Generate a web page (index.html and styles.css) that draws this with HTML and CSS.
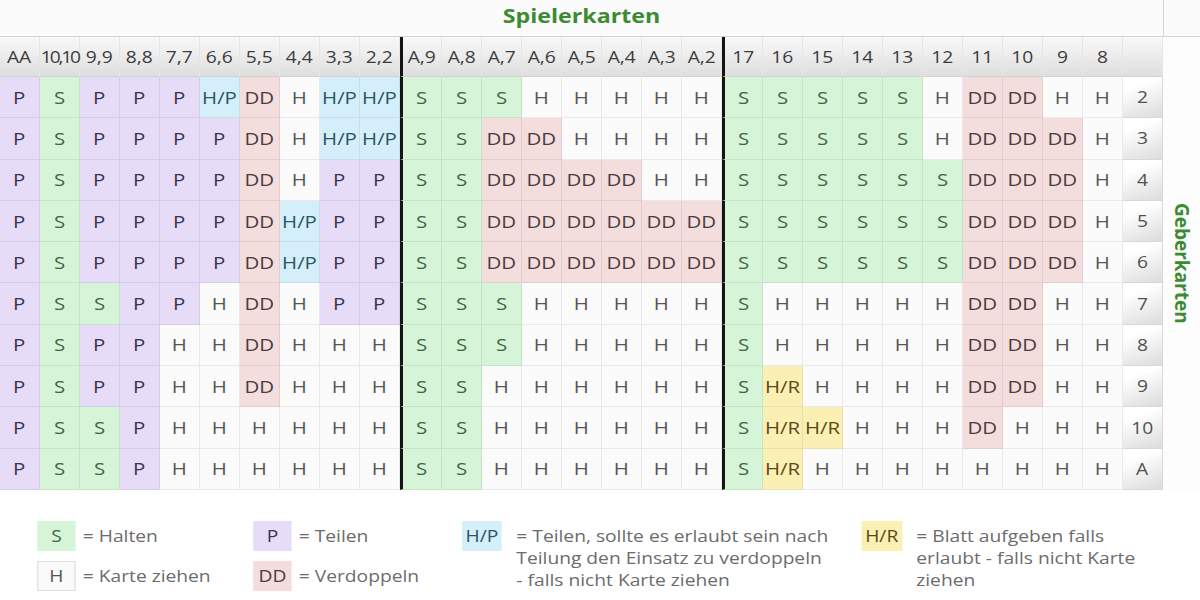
FILE: index.html
```html
<!DOCTYPE html>
<html lang="de">
<head>
<meta charset="utf-8">
<title>Blackjack Strategie</title>
<link rel="stylesheet" href="styles.css">
</head>
<body>
<div class="chart">
  <div class="title"><span>Spielerkarten</span></div>
  <div class="corner"></div>
  <div class="grid">
    <div class="hd"><span>AA</span></div><div class="hd"><span class="tight">10,10</span></div><div class="hd"><span>9,9</span></div><div class="hd"><span>8,8</span></div><div class="hd"><span>7,7</span></div><div class="hd"><span>6,6</span></div><div class="hd"><span>5,5</span></div><div class="hd"><span>4,4</span></div><div class="hd"><span>3,3</span></div><div class="hd"><span>2,2</span></div>
    <div class="hd x"><span>A,9</span></div><div class="hd"><span>A,8</span></div><div class="hd"><span>A,7</span></div><div class="hd"><span>A,6</span></div><div class="hd"><span>A,5</span></div><div class="hd"><span>A,4</span></div><div class="hd"><span>A,3</span></div><div class="hd"><span>A,2</span></div>
    <div class="hd x"><span>17</span></div><div class="hd"><span>16</span></div><div class="hd"><span>15</span></div><div class="hd"><span>14</span></div><div class="hd"><span>13</span></div><div class="hd"><span>12</span></div><div class="hd"><span>11</span></div><div class="hd"><span>10</span></div><div class="hd"><span>9</span></div><div class="hd"><span>8</span></div><div class="hd"></div>

    <div class="p"><span>P</span></div><div class="s"><span>S</span></div><div class="p"><span>P</span></div><div class="p"><span>P</span></div><div class="p"><span>P</span></div><div class="hp"><span>H/P</span></div><div class="dd"><span>DD</span></div><div class="h"><span>H</span></div><div class="hp"><span>H/P</span></div><div class="hp"><span>H/P</span></div>
    <div class="s x"><span>S</span></div><div class="s"><span>S</span></div><div class="s"><span>S</span></div><div class="h"><span>H</span></div><div class="h"><span>H</span></div><div class="h"><span>H</span></div><div class="h"><span>H</span></div><div class="h"><span>H</span></div>
    <div class="s x"><span>S</span></div><div class="s"><span>S</span></div><div class="s"><span>S</span></div><div class="s"><span>S</span></div><div class="s"><span>S</span></div><div class="h"><span>H</span></div><div class="dd"><span>DD</span></div><div class="dd"><span>DD</span></div><div class="h"><span>H</span></div><div class="h"><span>H</span></div><div class="dl"><span>2</span></div>

    <div class="p"><span>P</span></div><div class="s"><span>S</span></div><div class="p"><span>P</span></div><div class="p"><span>P</span></div><div class="p"><span>P</span></div><div class="p"><span>P</span></div><div class="dd"><span>DD</span></div><div class="h"><span>H</span></div><div class="hp"><span>H/P</span></div><div class="hp"><span>H/P</span></div>
    <div class="s x"><span>S</span></div><div class="s"><span>S</span></div><div class="dd"><span>DD</span></div><div class="dd"><span>DD</span></div><div class="h"><span>H</span></div><div class="h"><span>H</span></div><div class="h"><span>H</span></div><div class="h"><span>H</span></div>
    <div class="s x"><span>S</span></div><div class="s"><span>S</span></div><div class="s"><span>S</span></div><div class="s"><span>S</span></div><div class="s"><span>S</span></div><div class="h"><span>H</span></div><div class="dd"><span>DD</span></div><div class="dd"><span>DD</span></div><div class="dd"><span>DD</span></div><div class="h"><span>H</span></div><div class="dl"><span>3</span></div>

    <div class="p"><span>P</span></div><div class="s"><span>S</span></div><div class="p"><span>P</span></div><div class="p"><span>P</span></div><div class="p"><span>P</span></div><div class="p"><span>P</span></div><div class="dd"><span>DD</span></div><div class="h"><span>H</span></div><div class="p"><span>P</span></div><div class="p"><span>P</span></div>
    <div class="s x"><span>S</span></div><div class="s"><span>S</span></div><div class="dd"><span>DD</span></div><div class="dd"><span>DD</span></div><div class="dd"><span>DD</span></div><div class="dd"><span>DD</span></div><div class="h"><span>H</span></div><div class="h"><span>H</span></div>
    <div class="s x"><span>S</span></div><div class="s"><span>S</span></div><div class="s"><span>S</span></div><div class="s"><span>S</span></div><div class="s"><span>S</span></div><div class="s"><span>S</span></div><div class="dd"><span>DD</span></div><div class="dd"><span>DD</span></div><div class="dd"><span>DD</span></div><div class="h"><span>H</span></div><div class="dl"><span>4</span></div>

    <div class="p"><span>P</span></div><div class="s"><span>S</span></div><div class="p"><span>P</span></div><div class="p"><span>P</span></div><div class="p"><span>P</span></div><div class="p"><span>P</span></div><div class="dd"><span>DD</span></div><div class="hp"><span>H/P</span></div><div class="p"><span>P</span></div><div class="p"><span>P</span></div>
    <div class="s x"><span>S</span></div><div class="s"><span>S</span></div><div class="dd"><span>DD</span></div><div class="dd"><span>DD</span></div><div class="dd"><span>DD</span></div><div class="dd"><span>DD</span></div><div class="dd"><span>DD</span></div><div class="dd"><span>DD</span></div>
    <div class="s x"><span>S</span></div><div class="s"><span>S</span></div><div class="s"><span>S</span></div><div class="s"><span>S</span></div><div class="s"><span>S</span></div><div class="s"><span>S</span></div><div class="dd"><span>DD</span></div><div class="dd"><span>DD</span></div><div class="dd"><span>DD</span></div><div class="h"><span>H</span></div><div class="dl"><span>5</span></div>

    <div class="p"><span>P</span></div><div class="s"><span>S</span></div><div class="p"><span>P</span></div><div class="p"><span>P</span></div><div class="p"><span>P</span></div><div class="p"><span>P</span></div><div class="dd"><span>DD</span></div><div class="hp"><span>H/P</span></div><div class="p"><span>P</span></div><div class="p"><span>P</span></div>
    <div class="s x"><span>S</span></div><div class="s"><span>S</span></div><div class="dd"><span>DD</span></div><div class="dd"><span>DD</span></div><div class="dd"><span>DD</span></div><div class="dd"><span>DD</span></div><div class="dd"><span>DD</span></div><div class="dd"><span>DD</span></div>
    <div class="s x"><span>S</span></div><div class="s"><span>S</span></div><div class="s"><span>S</span></div><div class="s"><span>S</span></div><div class="s"><span>S</span></div><div class="s"><span>S</span></div><div class="dd"><span>DD</span></div><div class="dd"><span>DD</span></div><div class="dd"><span>DD</span></div><div class="h"><span>H</span></div><div class="dl"><span>6</span></div>

    <div class="p"><span>P</span></div><div class="s"><span>S</span></div><div class="s"><span>S</span></div><div class="p"><span>P</span></div><div class="p"><span>P</span></div><div class="h"><span>H</span></div><div class="dd"><span>DD</span></div><div class="h"><span>H</span></div><div class="p"><span>P</span></div><div class="p"><span>P</span></div>
    <div class="s x"><span>S</span></div><div class="s"><span>S</span></div><div class="s"><span>S</span></div><div class="h"><span>H</span></div><div class="h"><span>H</span></div><div class="h"><span>H</span></div><div class="h"><span>H</span></div><div class="h"><span>H</span></div>
    <div class="s x"><span>S</span></div><div class="h"><span>H</span></div><div class="h"><span>H</span></div><div class="h"><span>H</span></div><div class="h"><span>H</span></div><div class="h"><span>H</span></div><div class="dd"><span>DD</span></div><div class="dd"><span>DD</span></div><div class="h"><span>H</span></div><div class="h"><span>H</span></div><div class="dl"><span>7</span></div>

    <div class="p"><span>P</span></div><div class="s"><span>S</span></div><div class="p"><span>P</span></div><div class="p"><span>P</span></div><div class="h"><span>H</span></div><div class="h"><span>H</span></div><div class="dd"><span>DD</span></div><div class="h"><span>H</span></div><div class="h"><span>H</span></div><div class="h"><span>H</span></div>
    <div class="s x"><span>S</span></div><div class="s"><span>S</span></div><div class="s"><span>S</span></div><div class="h"><span>H</span></div><div class="h"><span>H</span></div><div class="h"><span>H</span></div><div class="h"><span>H</span></div><div class="h"><span>H</span></div>
    <div class="s x"><span>S</span></div><div class="h"><span>H</span></div><div class="h"><span>H</span></div><div class="h"><span>H</span></div><div class="h"><span>H</span></div><div class="h"><span>H</span></div><div class="dd"><span>DD</span></div><div class="dd"><span>DD</span></div><div class="h"><span>H</span></div><div class="h"><span>H</span></div><div class="dl"><span>8</span></div>

    <div class="p"><span>P</span></div><div class="s"><span>S</span></div><div class="p"><span>P</span></div><div class="p"><span>P</span></div><div class="h"><span>H</span></div><div class="h"><span>H</span></div><div class="dd"><span>DD</span></div><div class="h"><span>H</span></div><div class="h"><span>H</span></div><div class="h"><span>H</span></div>
    <div class="s x"><span>S</span></div><div class="s"><span>S</span></div><div class="h"><span>H</span></div><div class="h"><span>H</span></div><div class="h"><span>H</span></div><div class="h"><span>H</span></div><div class="h"><span>H</span></div><div class="h"><span>H</span></div>
    <div class="s x"><span>S</span></div><div class="hr"><span>H/R</span></div><div class="h"><span>H</span></div><div class="h"><span>H</span></div><div class="h"><span>H</span></div><div class="h"><span>H</span></div><div class="dd"><span>DD</span></div><div class="dd"><span>DD</span></div><div class="h"><span>H</span></div><div class="h"><span>H</span></div><div class="dl"><span>9</span></div>

    <div class="p"><span>P</span></div><div class="s"><span>S</span></div><div class="s"><span>S</span></div><div class="p"><span>P</span></div><div class="h"><span>H</span></div><div class="h"><span>H</span></div><div class="h"><span>H</span></div><div class="h"><span>H</span></div><div class="h"><span>H</span></div><div class="h"><span>H</span></div>
    <div class="s x"><span>S</span></div><div class="s"><span>S</span></div><div class="h"><span>H</span></div><div class="h"><span>H</span></div><div class="h"><span>H</span></div><div class="h"><span>H</span></div><div class="h"><span>H</span></div><div class="h"><span>H</span></div>
    <div class="s x"><span>S</span></div><div class="hr"><span>H/R</span></div><div class="hr"><span>H/R</span></div><div class="h"><span>H</span></div><div class="h"><span>H</span></div><div class="h"><span>H</span></div><div class="dd"><span>DD</span></div><div class="h"><span>H</span></div><div class="h"><span>H</span></div><div class="h"><span>H</span></div><div class="dl"><span>10</span></div>

    <div class="p"><span>P</span></div><div class="s"><span>S</span></div><div class="s"><span>S</span></div><div class="p"><span>P</span></div><div class="h"><span>H</span></div><div class="h"><span>H</span></div><div class="h"><span>H</span></div><div class="h"><span>H</span></div><div class="h"><span>H</span></div><div class="h"><span>H</span></div>
    <div class="s x"><span>S</span></div><div class="s"><span>S</span></div><div class="h"><span>H</span></div><div class="h"><span>H</span></div><div class="h"><span>H</span></div><div class="h"><span>H</span></div><div class="h"><span>H</span></div><div class="h"><span>H</span></div>
    <div class="s x"><span>S</span></div><div class="hr"><span>H/R</span></div><div class="h"><span>H</span></div><div class="h"><span>H</span></div><div class="h"><span>H</span></div><div class="h"><span>H</span></div><div class="h"><span>H</span></div><div class="h"><span>H</span></div><div class="h"><span>H</span></div><div class="h"><span>H</span></div><div class="dl"><span>A</span></div>
  </div>
  <div class="side"><span>Geberkarten</span></div>
</div>

<div class="legend">
  <div class="lcol c1">
    <div class="li"><div class="box s">S</div><div class="lt">= Halten</div></div>
    <div class="li"><div class="box h">H</div><div class="lt">= Karte ziehen</div></div>
  </div>
  <div class="lcol c2">
    <div class="li"><div class="box p">P</div><div class="lt">= Teilen</div></div>
    <div class="li"><div class="box dd">DD</div><div class="lt">= Verdoppeln</div></div>
  </div>
  <div class="lcol c3">
    <div class="lw"><div class="box hp">H/P</div><div class="ltm">= Teilen, sollte es erlaubt sein nach<br>Teilung den Einsatz zu verdoppeln<br>- falls nicht Karte ziehen</div></div>
  </div>
  <div class="lcol c4">
    <div class="lw"><div class="box hr">H/R</div><div class="ltm">= Blatt aufgeben falls<br>erlaubt - falls nicht Karte<br>ziehen</div></div>
  </div>
</div>
</body>
</html>
```

FILE: styles.css
```css
html, body {
  margin: 0;
  padding: 0;
  background: #ffffff;
}

body {
  font-family: "Open Sans", "Liberation Sans", sans-serif;
  width: 1200px;
  height: 600px;
  overflow: hidden;
}

.chart {
  display: grid;
  grid-template-columns: 1163px 37px;
  grid-template-rows: 37px 453px;
}

.title {
  display: flex;
  align-items: center;
  justify-content: center;
  background: #fbfbfb;
  border-bottom: 1px solid #d5d5d5;
  box-sizing: border-box;
}

.title span {
  display: inline-block;
  transform: scaleX(1.22);
  color: #3b8b33;
  font-weight: 700;
  font-size: 19px;
  line-height: 1;
  margin-top: -3px;
}

.corner {
  background: #fbfbfb;
  border-left: 1px solid #d5d5d5;
  border-bottom: 1px solid #d5d5d5;
  box-sizing: border-box;
}

.grid {
  display: grid;
  grid-template-columns: repeat(10, 40px) 42px repeat(7, 40px) 41px repeat(9, 40px) 40px;
  grid-template-rows: 40px repeat(10, 41.3px);
}

.grid > div {
  box-sizing: border-box;
  display: flex;
  align-items: center;
  justify-content: center;
  border-right: 1px solid rgba(0, 0, 0, 0.07);
  border-bottom: 1px solid rgba(0, 0, 0, 0.07);
  font-size: 17px;
  color: #4a4a4a;
}

.grid span {
  display: inline-block;
  transform: scaleX(1.2);
  white-space: nowrap;
}

.grid > .x {
  border-left: 3px solid #141414;
}

.hd {
  background: linear-gradient(#f9f9f9, #dedede);
  font-size: 16px !important;
  color: #3c3c3c !important;
  border-right-color: #e6e6e6 !important;
  border-bottom-color: #d2d2d2 !important;
}

.tight {
  letter-spacing: -1.8px;
}

.dl {
  background: linear-gradient(160deg, #ffffff 25%, #dcdcdc 100%);
  font-size: 16px !important;
  color: #505050 !important;
  border-right-color: #d8d8d8 !important;
  border-bottom-color: #d8d8d8 !important;
}

.s { background: #d6f5d8; color: #3f6645 !important; }
.p { background: #e6dcf7; color: #3b3350 !important; }
.dd { background: #f4dddd; color: #4a3c3c !important; }
.h { background: #fbfbfb; color: #565656 !important; }
.hp { background: #d4eff9; color: #2c5663 !important; }
.hr { background: #fbf0b4; color: #5a4915 !important; }

.side {
  display: flex;
  align-items: center;
  justify-content: center;
  background: #fdfdfd;
}

.side span {
  writing-mode: vertical-rl;
  color: #3b8b33;
  font-weight: 700;
  font-size: 19px;
  line-height: 1;
}

.legend {
  display: flex;
  margin-top: 31px;
  padding-left: 31px;
  width: 1000px;
  transform: scaleX(1.2);
  transform-origin: 0 0;
  color: #6c6c6c;
  font-size: 16px;
}

.lcol {
  display: flex;
  flex-direction: column;
  gap: 10px;
}

.c1 { width: 180px; }
.c2 { width: 174px; }
.c3 { width: 333px; }

.li {
  display: flex;
  align-items: center;
  gap: 6px;
  height: 30px;
}

.lw {
  display: flex;
  align-items: flex-start;
  gap: 12px;
}

.box {
  box-sizing: border-box;
  min-width: 32px;
  height: 30px;
  padding: 0 3px;
  display: flex;
  align-items: center;
  justify-content: center;
  font-size: 16px;
}

.box.h {
  border: 1px solid #dedede;
  background: #fafafa;
}

.lt {
  line-height: 22px;
}

.ltm {
  line-height: 22px;
  padding-top: 4px;
}
```
